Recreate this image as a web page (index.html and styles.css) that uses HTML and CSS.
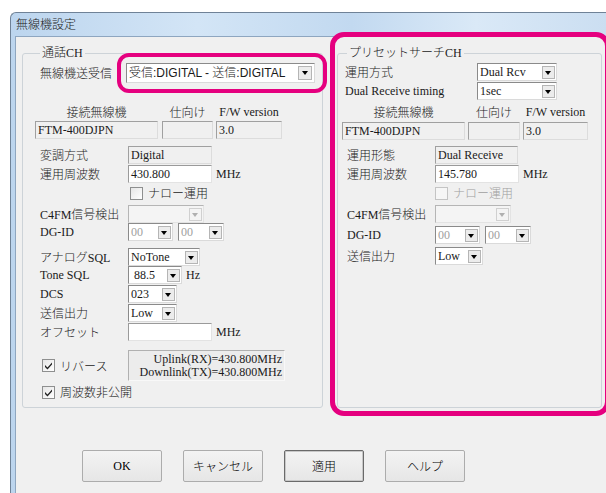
FILE: index.html
```html
<!DOCTYPE html>
<html>
  <head>
    <title>無線機設定</title>
    <meta charset="utf-8">
    <link rel="stylesheet" href="styles.css">
  </head>
<body>
  <div class="window">
    <div class="titlebar">無線機設定</div>

    <div class="client">
      <div class="groups">

        <fieldset class="group group-left">
          <legend>通話CH</legend>

          <div class="row row-main">
            <span class="lbl lbl-main">無線機送受信</span>
            <span class="combo combo-main w189"><span class="val">受信:DIGITAL - 送信:DIGITAL</span><span class="drop"></span></span>
          </div>

          <div class="row row-head mt22">
            <span class="head w123">接続無線機</span>
            <span class="head w51 ml4">仕向け</span>
            <span class="head w66 ml3">F/W version</span>
          </div>
          <div class="row mt2">
            <span class="box w123">FTM-400DJPN</span>
            <span class="box w51 ml4"></span>
            <span class="box w66 ml3">3.0</span>
          </div>

          <div class="row mt7">
            <span class="lbl">変調方式</span>
            <span class="box w84">Digital</span>
          </div>
          <div class="row">
            <span class="lbl">運用周波数</span>
            <span class="box edit w84">430.800</span>
            <span class="unit">MHz</span>
          </div>
          <div class="row row-check mt3">
            <span class="lbl"></span>
            <span class="chk ml2"></span>
            <span class="chk-text">ナロー運用</span>
          </div>
          <div class="row mt5">
            <span class="lbl">C4FM信号検出</span>
            <span class="combo disabled w76"><span class="val"></span><span class="drop"></span></span>
          </div>
          <div class="row mt0">
            <span class="lbl">DG-ID</span>
            <span class="combo w45"><span class="val dim">00</span><span class="drop"></span></span>
            <span class="combo w46 ml5"><span class="val dim">00</span><span class="drop"></span></span>
          </div>
          <div class="row mt7">
            <span class="lbl">アナログSQL</span>
            <span class="combo w72"><span class="val">NoTone</span><span class="drop"></span></span>
          </div>
          <div class="row mt0">
            <span class="lbl">Tone SQL</span>
            <span class="combo w54"><span class="val">&nbsp;88.5</span><span class="drop"></span></span>
            <span class="unit ml8">Hz</span>
          </div>
          <div class="row">
            <span class="lbl">DCS</span>
            <span class="combo w49"><span class="val">023</span><span class="drop"></span></span>
          </div>
          <div class="row">
            <span class="lbl">送信出力</span>
            <span class="combo w49"><span class="val">Low</span><span class="drop"></span></span>
          </div>
          <div class="row">
            <span class="lbl">オフセット</span>
            <span class="box edit w84"></span>
            <span class="unit">MHz</span>
          </div>

          <div class="row row-tall mt9">
            <span class="lbl lbl-check">
              <span class="chk checked"><svg width="9" height="9" viewBox="0 0 9 9"><path d="M1 4 L3.5 6.5 L8 1.5 L8 3.5 L3.5 8.5 L1 6 Z" fill="#222"/></svg></span>
              <span class="chk-text">リバース</span>
            </span>
            <span class="static w157">Uplink(RX)=430.800MHz<br>Downlink(TX)=430.800MHz</span>
          </div>
          <div class="row row-check mt4">
            <span class="lbl lbl-check">
              <span class="chk checked"><svg width="9" height="9" viewBox="0 0 9 9"><path d="M1 4 L3.5 6.5 L8 1.5 L8 3.5 L3.5 8.5 L1 6 Z" fill="#222"/></svg></span>
              <span class="chk-text nowrap">周波数非公開</span>
            </span>
          </div>
        </fieldset>

        <fieldset class="group group-right">
          <legend>プリセットサーチCH</legend>

          <div class="row row-first">
            <span class="lbl lbl-wide">運用方式</span>
            <span class="combo w80"><span class="val">Dual Rcv</span><span class="drop"></span></span>
          </div>
          <div class="row">
            <span class="lbl lbl-wide">Dual Receive timing</span>
            <span class="combo w80"><span class="val">1sec</span><span class="drop"></span></span>
          </div>

          <div class="row row-head mt5">
            <span class="head w123">接続無線機</span>
            <span class="head w52 ml3">仕向け</span>
            <span class="head w65 ml3">F/W version</span>
          </div>
          <div class="row mt3">
            <span class="box w123">FTM-400DJPN</span>
            <span class="box w52 ml3"></span>
            <span class="box w65 ml3">3.0</span>
          </div>

          <div class="row mt6">
            <span class="lbl">運用形態</span>
            <span class="box w83">Dual Receive</span>
          </div>
          <div class="row">
            <span class="lbl">運用周波数</span>
            <span class="box edit w84">145.780</span>
            <span class="unit ml6">MHz</span>
          </div>
          <div class="row row-check mt3">
            <span class="lbl"></span>
            <span class="chk chk-off"></span>
            <span class="chk-text dim">ナロー運用</span>
          </div>
          <div class="row mt5">
            <span class="lbl">C4FM信号検出</span>
            <span class="combo disabled w76"><span class="val"></span><span class="drop"></span></span>
          </div>
          <div class="row mt3">
            <span class="lbl">DG-ID</span>
            <span class="combo w45"><span class="val dim">00</span><span class="drop"></span></span>
            <span class="combo w46 ml5"><span class="val dim">00</span><span class="drop"></span></span>
          </div>
          <div class="row mt3">
            <span class="lbl">送信出力</span>
            <span class="combo w48"><span class="val">Low</span><span class="drop"></span></span>
          </div>
        </fieldset>

      </div>

      <div class="buttons">
        <button type="button">OK</button>
        <button type="button">キャンセル</button>
        <button type="button" class="default">適用</button>
        <button type="button">ヘルプ</button>
      </div>
    </div>

    <div class="mark mark-combo"></div>
    <div class="mark mark-group"></div>
  </div>
</body>
</html>
```

FILE: styles.css
```css
html,
body {
  margin: 0;
  height: 100%;
  overflow: hidden;
  background: #ffffff;
}

body {
  font-family: "Liberation Serif", "Noto Sans CJK JP", serif;
  font-size: 12px;
  font-weight: 300;
  color: #1a1a1a;
}

.window {
  position: relative;
  margin: 12px 0 0 10px;
  width: 620px;
  height: 500px;
  border: 1px solid #6f8297;
  border-right: 0;
  border-bottom: 0;
  border-radius: 6px 0 0 0;
  background: linear-gradient(to right, #bcd5ee, #d3e5f6 30%, #c2d9f0 55%, #dae9f7 75%, #c8dcf0);
}

.titlebar {
  height: 23px;
  line-height: 24px;
  padding-left: 5px;
  font-family: "Liberation Sans", "Noto Sans CJK JP", sans-serif;
  font-size: 12px;
}

.client {
  margin-left: 4px;
  height: 470px;
  border-left: 1px solid #8ea6c0;
  border-top: 1px solid #8ea6c0;
  background: #f0f0f0;
}

.groups {
  display: flex;
  align-items: stretch;
  gap: 14px;
  padding: 9px 0 0 6px;
}

.group {
  margin: 0;
  min-width: 0;
  box-sizing: border-box;
  border: 1px solid #cdd3d8;
  border-radius: 3px;
}

.group legend {
  margin-left: 5px;
  padding: 0 2px;
  line-height: 14px;
}

.group-left {
  width: 301px;
  padding: 0 0 8px 12px;
}

.group-right {
  width: 265px;
  padding: 0 0 0 4px;
}

/* rows */

.row {
  display: flex;
  align-items: center;
  height: 18px;
  margin-top: 1px;
  white-space: nowrap;
}

.row-main {
  height: 20px;
  margin-top: 3px;
}

.row-first {
  margin-top: 3px;
}

.row-head {
  height: 14px;
}

.row-check {
  height: 14px;
}

.row-tall {
  height: 31px;
}

.mt0 { margin-top: 0; }
.mt2 { margin-top: 2px; }
.mt3 { margin-top: 3px; }
.mt4 { margin-top: 4px; }
.mt5 { margin-top: 5px; }
.mt6 { margin-top: 6px; }
.mt7 { margin-top: 7px; }
.mt9 { margin-top: 9px; }
.mt22 { margin-top: 22px; }

.ml2 { margin-left: 2px; }
.ml3 { margin-left: 3px; }
.ml4 { margin-left: 4px; }
.ml5 { margin-left: 5px; }
.ml6 { margin-left: 6px; }
.ml8 { margin-left: 8px; }

.w45 { width: 45px; }
.w46 { width: 46px; }
.w48 { width: 48px; }
.w49 { width: 49px; }
.w51 { width: 51px; }
.w52 { width: 52px; }
.w54 { width: 54px; }
.w65 { width: 65px; }
.w66 { width: 66px; }
.w72 { width: 72px; }
.w76 { width: 76px; }
.w80 { width: 80px; }
.w83 { width: 83px; }
.w84 { width: 84px; }
.w123 { width: 123px; }
.w157 { width: 157px; }
.w189 { width: 189px; }

.lbl {
  flex: none;
  width: 93px;
  box-sizing: border-box;
  padding-left: 5px;
}

.lbl-main {
  width: 91px;
}

.lbl-wide {
  width: 135px;
  padding-left: 3px;
}

.lbl-check {
  display: flex;
  align-items: center;
  padding-left: 7px;
}

.head {
  flex: none;
  text-align: center;
}

.unit {
  margin-left: 4px;
}

.dim {
  color: #a0a0a0;
}

/* text boxes */

.box {
  flex: none;
  box-sizing: border-box;
  height: 18px;
  line-height: 16px;
  padding-left: 2px;
  border: 1px solid;
  border-color: #a0a0a0 #dcdcdc #dcdcdc #a0a0a0;
  background: #f0f0f0;
}

.box.edit {
  background: #ffffff;
  border-color: #9a9a9a #e3e3e3 #e3e3e3 #9a9a9a;
}

.static {
  flex: none;
  box-sizing: border-box;
  height: 31px;
  padding: 2px 2px 0 0;
  line-height: 13px;
  text-align: right;
  border: 1px solid;
  border-color: #b0b0b0 #f8f8f8 #f8f8f8 #b0b0b0;
  background: #ececec;
}

/* combo boxes */

.combo {
  flex: none;
  display: flex;
  align-items: center;
  box-sizing: border-box;
  height: 18px;
  border: 1px solid;
  border-color: #8a8a8a #dadada #dadada #8a8a8a;
  background: #ffffff;
}

.combo .val {
  flex: 1;
  overflow: hidden;
  padding-left: 2px;
  line-height: 16px;
}

.combo .drop {
  position: relative;
  flex: none;
  width: 13px;
  height: 13px;
  margin-right: 1px;
  box-sizing: border-box;
  border: 1px solid #b5b5b5;
  background: #ececec;
}

.combo .drop::after {
  content: "";
  position: absolute;
  left: 2px;
  top: 4px;
  border-top: 4px solid #000;
  border-left: 3.5px solid transparent;
  border-right: 3.5px solid transparent;
}

.combo-main {
  height: 20px;
  font-family: "Liberation Sans", "Noto Sans CJK JP", sans-serif;
}

.combo-main .drop {
  width: 14px;
  height: 14px;
  margin-right: 2px;
}

.combo-main .drop::after {
  left: 2.5px;
}

.combo.disabled {
  background: #f4f4f4;
  border-color: #b5b5b5 #e3e3e3 #e3e3e3 #b5b5b5;
}

.combo.disabled .drop {
  border-color: #d0d0d0;
  background: #f4f4f4;
}

.combo.disabled .drop::after {
  border-top-color: #b0b0b0;
}

/* checkboxes */

.chk {
  flex: none;
  display: flex;
  align-items: center;
  justify-content: center;
  width: 11px;
  height: 11px;
  border: 1px solid #8e8f8f;
  background: linear-gradient(135deg, #e6e6e6, #ffffff);
}

.chk-off {
  border-color: #c4c4c4;
  background: #f6f6f6;
}

.chk-text {
  margin-left: 5px;
}

.nowrap {
  white-space: nowrap;
}

/* buttons */

.buttons {
  display: flex;
  gap: 21px;
  margin-top: 42px;
  padding-left: 66px;
}

.buttons button {
  width: 80px;
  height: 32px;
  padding: 0;
  font-family: "Liberation Serif", "Noto Sans CJK JP", serif;
  font-size: 12px;
  font-weight: 300;
  color: #000;
  border: 1px solid #acacac;
  border-radius: 2px;
  background: linear-gradient(#f3f3f3, #e6e6e6);
}

.buttons button.default {
  border-color: #6a6a6a;
  box-shadow: inset 0 0 0 1px #c8c8c8;
}

/* red annotation rings over the dialog */

.mark {
  position: absolute;
  box-sizing: border-box;
  border: 5px solid #e5007f;
}

.mark-combo {
  left: 106px;
  top: 40px;
  width: 210px;
  height: 40px;
  border-width: 4px;
  border-radius: 12px;
}

.mark-group {
  left: 319px;
  top: 19px;
  width: 280px;
  height: 384px;
  border-radius: 14px;
}
```
